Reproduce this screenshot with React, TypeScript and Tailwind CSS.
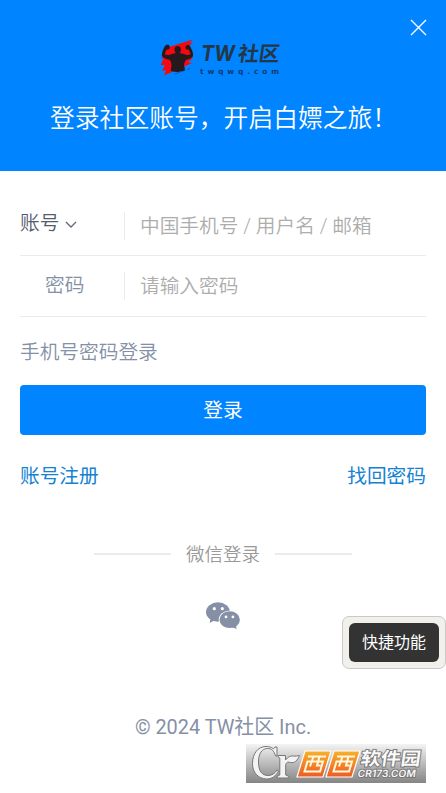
import React from 'react';

const WeChatIcon = () => (
  <svg width="34" height="28" viewBox="0 0 34 28" fill="#8590a6">
    <ellipse cx="12" cy="10" rx="12" ry="9.700" />
    <path d="M4.500 16l-.8 5 5-2.700z" />
    <ellipse cx="23.700" cy="17.700" rx="11" ry="9.200" fill="#fff" />
    <ellipse cx="23.700" cy="17.700" rx="10.200" ry="8.400" />
    <path d="M26 25l4.500 2-.5-4z" />
    <g fill="#fff">
      <circle cx="8.300" cy="6.700" r="1.600" />
      <circle cx="16.300" cy="6.700" r="1.600" />
      <circle cx="20" cy="14.900" r="1.400" />
      <circle cx="26.900" cy="14.900" r="1.400" />
    </g>
  </svg>
);

const SiteLogo = () => (
  <svg width="126" height="40" viewBox="0 0 126 40">
    <path d="M34 1.500 L13 8 L9 10 L3 14 L6 14 L2 21 L5 20 L1.500 27 L6 27 L3 33 L7 32 L5 37.500 L15 33 L27 30 L24 29 L33 25 L29 24 L34 20 L31 17 L31 7 L34 4 L30 5z" fill="#f5090f" />
    <path d="M16 36l5-2M22 34l4-2M28 32l3-2" stroke="#0758b8" strokeWidth="1" />
    <path d="M18.500 8c2.400 0 3.700 1.700 3.400 4.100-.1 1.300-.5 2.300-1.100 2.900 1.900.7 4.500.7 6.700 2.100 1.600-.3 3-.3 4-.9-.6-1.800-1.100-3.300-2.200-4.600l-2.100-.1c-1.200-1-.8-3.500.4-4.200 1.500-.9 3.100-.2 3.800 1.400 1.500 3 3 6 2.700 9.400-1.400 2.300-4.200 3.300-7.200 3.800-1.400 2.200-1.900 3.500-1.800 6 .5 1.500.8 3 .8 4.500-2.300.6-4.800 1.100-7.300 1.600-2.400-.2-4.500-.5-6.700-1.100 0-1.600.1-3.200.6-4.800.1-2.500-.4-4.300-1.800-6.400-3.200-.5-6.300-1.500-7.800-3.800-.2-3.500 1.200-6.500 2.800-9.500.8-1.500 2.600-2.200 4.100-1.300 1.200.9 1.500 3.400.3 4.200l-2.100.1c-1.200 1.400-1.700 3-2.300 4.800 1.200.6 2.700.6 4.500.9 2.200-1.400 4.700-1.400 6.500-2.100-.7-.6-1.100-1.600-1.200-2.900-.2-2.400.8-4.100 3.200-4.100z" fill="#26191e" />
    <g fill="#253747">
      <text x="42" y="23" fontSize="21.500" fontStyle="italic" fontFamily="Inter, sans-serif" fontWeight="700" textLength="34" lengthAdjust="spacingAndGlyphs">TW</text>
      <g transform="skewX(-8)">
        <text x="81.500" y="22.500" fontSize="20.500" fontFamily="'Noto Sans CJK SC', sans-serif" fontWeight="700" textLength="41.500" lengthAdjust="spacingAndGlyphs">社区</text>
      </g>
    </g>
    <text x="41" y="36" fontSize="7.500" fontWeight="700" fontFamily="'DejaVu Sans', sans-serif" fill="#123b78" textLength="79">twqwq.com</text>
  </svg>
);

const Watermark = () => (
  <svg width="180" height="39" viewBox="0 0 180 39" className="block">
    <defs>
      <linearGradient id="orange" x1="0" y1="0" x2="0" y2="1">
        <stop offset="0" stopColor="#f7b22b" />
        <stop offset="1" stopColor="#ee5a24" />
      </linearGradient>
    </defs>
    <g fill="#f3f3f3" stroke="#777" strokeWidth="1">
      <path d="M31 3v9h-1.500C28 6.500 25.500 4.500 21.500 4.500c-5.500 0-9 5-9 13.500 0 9 3.500 13.500 9.500 13.500 4 0 7-2 9-5.500l1.500 1c-2.500 5-6.500 8-12 8-8.500-.5-14-6.500-14-15.500C6.500 9.500 12 2.500 20 2.500c3.500 0 5.500 1 7.500 2.200.8-.2 1.200-.9 1.500-1.700z" />
      <path d="M32 11.500h7.500v4.500c2.500-3.200 5-4.500 8-4 2 .5 3.500-.2 6-.5-2 5-5 8-9 7-2.500-1-4-.2-4.800 2V31l3.300 1.500V34H31v-1.500l2.800-1.500V14l-1.800-1z" />
    </g>
    <path d="M59 7h26l-8 26H51z M88 7h26l-8 26H80z" fill="url(#orange)" stroke="#fff" strokeWidth="1.200" />
    <g fill="none" stroke="#fff8dd" strokeWidth="2">
      <path d="M62 12.500h18M61.500 17.500h15.500l-3 10H58.500zM67.500 12.500l-3.500 10M73.500 12.500l-2.500 9h3.500M91 12.500h18M90.500 17.500h15.500l-3 10H87.500zM96.500 12.500l-3.500 10M102.500 12.500l-2.500 9h3.500" />
    </g>
    <g fill="#fafafa" stroke="#777" strokeWidth="1.800" paintOrder="stroke" transform="skewX(-8)">
      <text x="117" y="21" fontSize="18" fontWeight="700" fontFamily="'Noto Sans CJK SC', sans-serif" textLength="60" lengthAdjust="spacingAndGlyphs">软件园</text>
      <text x="116" y="33" fontSize="10" fontWeight="600" fontFamily="Inter, sans-serif" textLength="58" lengthAdjust="spacingAndGlyphs">CR173.COM</text>
    </g>
  </svg>
);

const App: React.FC = () => {
  return (
    <div className="relative flex h-[793px] w-[446px] flex-col overflow-hidden bg-white font-[Roboto,'Noto_Sans_CJK_SC',sans-serif] text-[19.7px] leading-7 text-[#8590a6]">
      <header className="relative flex h-[171px] shrink-0 flex-col items-center bg-[#0084ff] pt-[38px]">
        <button aria-label="关闭" className="absolute top-[19px] right-[19px] text-white">
          <svg width="17" height="17" viewBox="0 0 17 17" stroke="currentColor" strokeWidth="1.400">
            <path d="M1 1l15 15M16 1L1 16" />
          </svg>
        </button>
        <div className="h-10 pr-0.5"><SiteLogo /></div>
        <h1 className="mt-[23px] ml-[50px] self-start whitespace-nowrap text-[24.8px] leading-9 font-[350] text-white">登录社区账号，开启白嫖之旅！</h1>
      </header>

      <main className="flex flex-col px-5">
        <div className="flex h-[85px] items-end border-b border-[#ebebeb] pb-[15px]">
          <button className="flex w-[104px] items-center gap-1.5 pb-0.5 font-[350] text-[#535b6d]">
            账号
            <svg width="12" height="8" viewBox="0 0 12 8" fill="none" stroke="#646b7b" strokeWidth="1.400" className="mt-0.5">
              <path d="M1 1l5 5 5-5" />
            </svg>
          </button>
          <div className="h-7 border-l border-[#ebebeb] pl-[15px] whitespace-nowrap leading-[30px] font-[350] text-[#adadad]">中国手机号 / 用户名 / 邮箱</div>
        </div>
        <div className="flex h-[61px] items-end border-b border-[#ebebeb] pb-4">
          <span className="w-[104px] pl-[25px] font-[350]">密码</span>
          <div className="h-7 border-l border-[#ebebeb] pl-[15px] leading-[30px] font-[350] text-[#adadad]">请输入密码</div>
        </div>
        <div className="mt-[22px] h-[26px] font-[350]">手机号密码登录</div>
        <button className="mt-5 h-[50px] rounded-[4px] bg-[#0084ff] pt-0.5 text-white">登录</button>
        <div className="mt-7 flex justify-between text-[#1582d2]">
          <a>账号注册</a>
          <a>找回密码</a>
        </div>
        <div className="mt-[49px] flex items-center justify-center gap-[15px] text-[18.500px] text-[#999]">
          <span className="h-0.5 w-[77px] bg-[#ebebeb]" />
          <span className="h-7 leading-[30px] font-[350]">微信登录</span>
          <span className="h-0.5 w-[77px] bg-[#ebebeb]" />
        </div>
        <div className="mt-[34px] flex justify-center"><WeChatIcon /></div>
      </main>

      <footer className="mt-[84px] text-center text-[19.9px]">© 2024 TW社区 Inc.</footer>

      <div className="absolute top-[616px] left-[342px] h-[53px] w-[104px] rounded-[7px] border border-[#c9c9c9] bg-[#f1f0eb] p-1.5">
        <button className="h-[39px] w-[90px] rounded-[6px] bg-[#333] text-[16px] text-white">快捷功能</button>
      </div>
      <div className="absolute top-[744px] left-[246px] h-[39px] w-[180px] bg-linear-to-b from-[#f4f4f4] to-[#858585]">
        <Watermark />
      </div>
    </div>
  );
};

export default App;
